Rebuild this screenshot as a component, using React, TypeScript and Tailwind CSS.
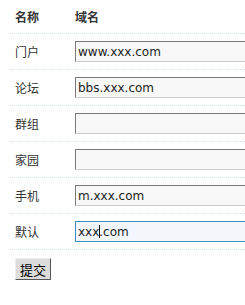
import React from "react"

const rows = [
  { label: "门户", value: "www.xxx.com" },
  { label: "论坛", value: "bbs.xxx.com" },
  { label: "群组", value: "" },
  { label: "家园", value: "" },
  { label: "手机", value: "m.xxx.com" },
]

const cjk = { fontFamily: '"Noto Sans CJK SC", "Noto Sans", sans-serif' }
const latin = { fontFamily: '"DejaVu Sans", Verdana, sans-serif' }

export default function App() {
  return (
    <div className="w-[245px] h-[305px] overflow-hidden bg-white text-[12px] text-[#333]" style={cjk}>
      <div className="pl-[10px]">
        <div className="h-[34px] flex items-center border-b border-dotted border-[#cfdfee] font-bold">
          <span className="w-[65px] pl-[5px]">名称</span>
          <span>域名</span>
        </div>

        {rows.map((row) => (
          <div key={row.label} className="h-[36px] flex items-center border-b border-dotted border-[#cfdfee]">
            <span className="w-[65px] pl-[5px] shrink-0">{row.label}</span>
            <input
              readOnly
              value={row.value}
              className="w-[200px] h-[21px] shrink-0 px-[2px] bg-[#f8f8f8] text-[12px] text-[#222] border border-t-[#7a7a7a] border-l-[#7a7a7a] border-b-[#cccccc] border-r-[#cccccc] outline-none"
              style={latin}
            />
          </div>
        ))}

        <div className="h-[36px] flex items-center border-b border-dotted border-[#cfdfee]">
          <span className="w-[65px] pl-[5px] shrink-0">默认</span>
          <div className="relative shrink-0">
            <input
              readOnly
              value="xxx.com"
              className="w-[200px] h-[21px] px-[2px] bg-[#f4f8fd] text-[12px] text-[#222] border border-[#3b8fbf] outline-none"
              style={latin}
            />
            <span className="absolute left-[24px] top-[4px] w-px h-[13px] bg-[#111]" />
          </div>
        </div>
      </div>

      <div className="pl-[15px] pt-[8px]">
        <button className="w-[36px] h-[22px] bg-[#dcdcdc] text-[13px] text-black leading-none border border-t-[#eeeeee] border-l-[#eeeeee] border-r-[#555555] border-b-[#555555]">
          提交
        </button>
      </div>
    </div>
  )
}
